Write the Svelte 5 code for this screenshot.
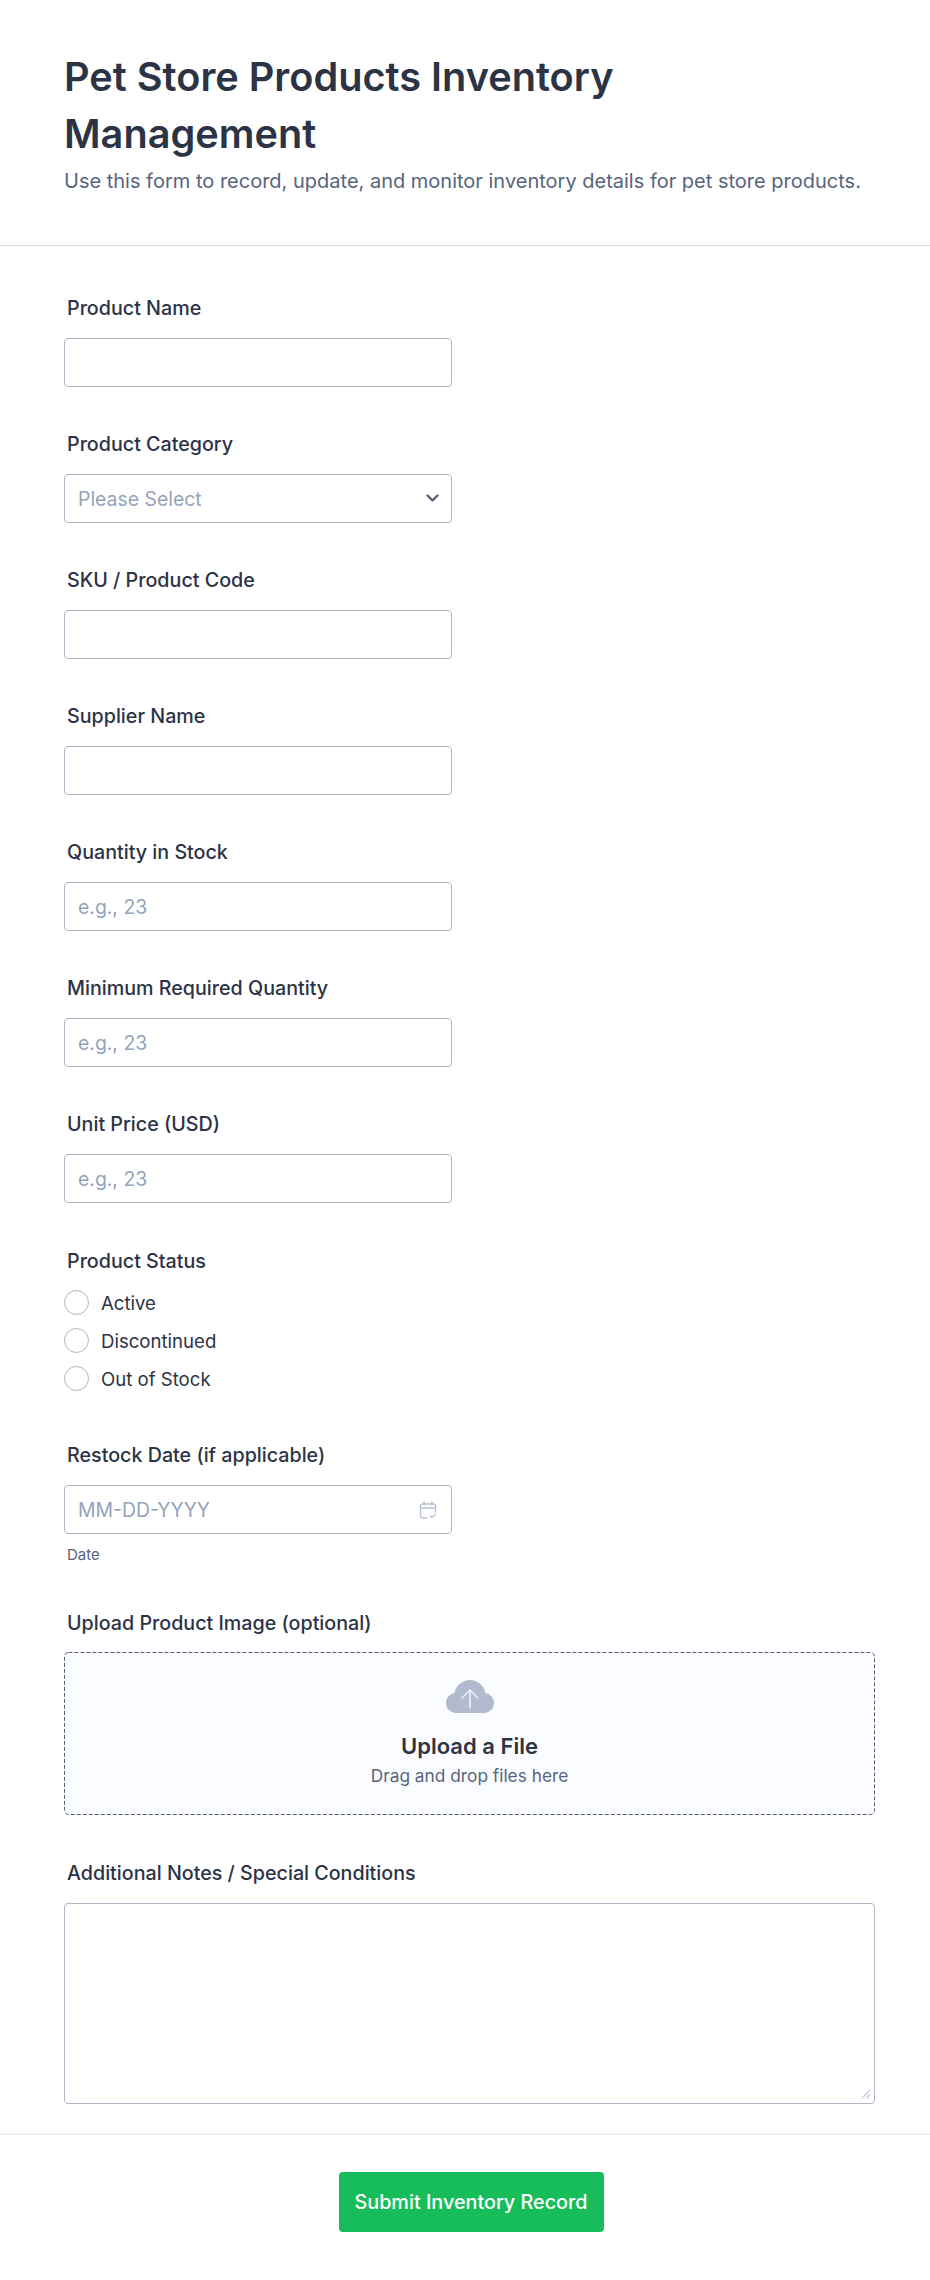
<script>
	const fieldsTop = [
		{ label: 'Product Name', kind: 'text', placeholder: '' },
		{ label: 'Product Category', kind: 'select', placeholder: 'Please Select' },
		{ label: 'SKU / Product Code', kind: 'text', placeholder: '' },
		{ label: 'Supplier Name', kind: 'text', placeholder: '' },
		{ label: 'Quantity in Stock', kind: 'text', placeholder: 'e.g., 23' },
		{ label: 'Minimum Required Quantity', kind: 'text', placeholder: 'e.g., 23' },
		{ label: 'Unit Price (USD)', kind: 'text', placeholder: 'e.g., 23' }
	];
	const statuses = ['Active', 'Discontinued', 'Out of Stock'];
</script>

<div class="page">
	<header class="head">
		<h1>Pet Store Products Inventory Management</h1>
		<p>Use this form to record, update, and monitor inventory details for pet store products.</p>
	</header>

	<form class="form">
		{#each fieldsTop as { label, kind, placeholder }}
			<div class="field">
				<div class="label">{label}</div>
				{#if kind === 'select'}
					<div class="input select">
						<span class="ph">{placeholder}</span>
						<svg width="13" height="9" viewBox="0 0 13 9" fill="none">
							<path d="M1.5 1.5 6.5 6.5l5-5" stroke="#57607a" stroke-width="2.4" stroke-linecap="round" stroke-linejoin="round" />
						</svg>
					</div>
				{:else}
					<input class="input" type="text" {placeholder} />
				{/if}
			</div>
		{/each}

		<div class="field status">
			<div class="label">Product Status</div>
			<div class="radios">
				{#each statuses as s}
					<div class="radio">
						<span class="dot"></span>
						<span>{s}</span>
					</div>
				{/each}
			</div>
		</div>

		<div class="field date">
			<div class="label">Restock Date (if applicable)</div>
			<div class="input select cal">
				<span class="ph">MM-DD-YYYY</span>
				<svg width="18" height="18" viewBox="0 0 18 18" fill="none" stroke="#b8c0d2" stroke-width="1.4" stroke-linecap="round" stroke-linejoin="round">
					<path d="M8 17H3.5A2 2 0 0 1 1.5 15V5A2 2 0 0 1 3.5 3h11a2 2 0 0 1 2 2v6" />
					<path d="M1.5 7h15M5 1v3M13 1v3" />
					<path d="m11.5 15 1.5 1.5 3-3" />
				</svg>
			</div>
			<div class="sub">Date</div>
		</div>

		<div class="field wide upload-field">
			<div class="label">Upload Product Image (optional)</div>
			<div class="upload">
				<svg class="dashes" width="811" height="163" viewBox="0 0 811 163" fill="none">
					<rect x="0.5" y="0.5" width="810" height="162" rx="4" stroke="#57607a" stroke-dasharray="4 2" />
				</svg>
				<svg width="48" height="33" viewBox="0 0 48 33">
					<path d="M10 33A10 10 0 0 1 8.5 13.1 16 16 0 0 1 24 0a16 16 0 0 1 15.5 13.1A10 10 0 0 1 38 33Z" fill="#b1bace" />
					<path d="M24 28V10M16 18l8-8 8 8" fill="none" stroke="#eef0f5" stroke-width="1.6" stroke-linecap="round" stroke-linejoin="round" />
				</svg>
				<div class="up-title">Upload a File</div>
				<div class="up-sub">Drag and drop files here</div>
			</div>
		</div>

		<div class="field wide notes">
			<div class="label">Additional Notes / Special Conditions</div>
			<div class="area-wrap">
				<textarea class="input area"></textarea>
				<svg class="grip" width="10" height="10" viewBox="0 0 10 10" fill="none" stroke="#c4c8d6" stroke-width="1.2">
					<path d="M1 9 9 1M5.5 9 9 5.5" />
				</svg>
			</div>
		</div>
	</form>

	<footer class="foot">
		<button type="button" class="submit">Submit Inventory Record</button>
	</footer>
</div>

<style>
	:global(body) {
		margin: 0;
		background: #fff;
		font-family: Inter, 'Liberation Sans', sans-serif;
		color: #2c3345;
	}

	.page {
		width: 930px;
		height: 2280px;
		box-sizing: border-box;
		overflow: hidden;
	}

	.head {
		box-sizing: border-box;
		height: 246px;
		padding: 49px 64px 0;
		border-bottom: 1px solid #d8dbe6;
	}

	h1 {
		margin: 0;
		font-size: 39.7px;
		line-height: 57px;
		font-weight: 600;
		color: #2c3345;
	}

	.head p {
		margin: 0;
		font-size: 20px;
		line-height: 36px;
		color: #57647e;
	}

	.form {
		padding: 50px 64px 0;
	}

	.field {
		width: 388px;
		height: 136px;
	}

	.label {
		padding-left: 3px;
		font-size: 19.7px;
		line-height: 24px;
		font-weight: 500;
		color: #2c3345;
		margin-bottom: 18px;
	}

	.input {
		display: block;
		box-sizing: border-box;
		width: 388px;
		height: 49px;
		margin: 0;
		padding: 0 13px;
		border: 1px solid #b0b5c8;
		border-radius: 4px;
		background: #fff;
		font: 400 19.4px Inter, sans-serif;
		color: #2c3345;
	}

	.input::placeholder,
	.ph {
		color: #94a3bb;
	}

	.select {
		display: flex;
		align-items: center;
		justify-content: space-between;
		padding-right: 12px;
	}

	.cal {
		padding-right: 14px;
	}

	.status {
		height: 195px;
		padding-top: 1px;
		box-sizing: border-box;
	}

	.status .label {
		margin-bottom: 17px;
	}

	.radios {
		display: flex;
		flex-direction: column;
		gap: 13px;
	}

	.radio {
		display: flex;
		align-items: center;
		gap: 12px;
		height: 25px;
		font-size: 18.6px;
		color: #2c3345;
	}

	.dot {
		box-sizing: border-box;
		width: 25px;
		height: 25px;
		border: 1px solid #b0b5c8;
		border-radius: 50%;
	}

	.date {
		height: 168px;
	}

	.sub {
		padding-left: 3px;
		margin-top: 12px;
		font-size: 15px;
		line-height: 18px;
		color: #57647e;
	}

	.wide {
		width: 811px;
	}

	.upload-field {
		height: 250px;
	}

	.upload-field .label {
		margin-bottom: 17px;
	}

	.upload {
		position: relative;
		box-sizing: border-box;
		width: 811px;
		height: 163px;
		border-radius: 4px;
		background: #fbfcff;
		display: flex;
		flex-direction: column;
		align-items: center;
		padding-top: 28px;
	}

	.dashes {
		position: absolute;
		top: 0;
		left: 0;
	}

	.up-title {
		margin-top: 18px;
		font-size: 22px;
		line-height: 30px;
		font-weight: 600;
		color: #2c3345;
	}

	.up-sub {
		margin-top: 3px;
		font-size: 17.3px;
		line-height: 24px;
		color: #57647e;
	}

	.notes {
		height: 272px;
	}

	.area-wrap {
		position: relative;
		width: 811px;
		height: 201px;
	}

	.area {
		width: 811px;
		height: 201px;
		resize: none;
	}

	.grip {
		position: absolute;
		right: 4px;
		bottom: 5px;
	}

	.foot {
		height: 147px;
		border-top: 2px solid #f0f1f5;
		display: flex;
		justify-content: center;
		padding: 37px 0 0 12px;
		box-sizing: border-box;
	}

	.submit {
		width: 265px;
		height: 60px;
		border: 0;
		border-radius: 4px;
		background: #18bd5b;
		color: #fff;
		font: 500 19.8px Inter, sans-serif;
		padding: 0;
	}
</style>
